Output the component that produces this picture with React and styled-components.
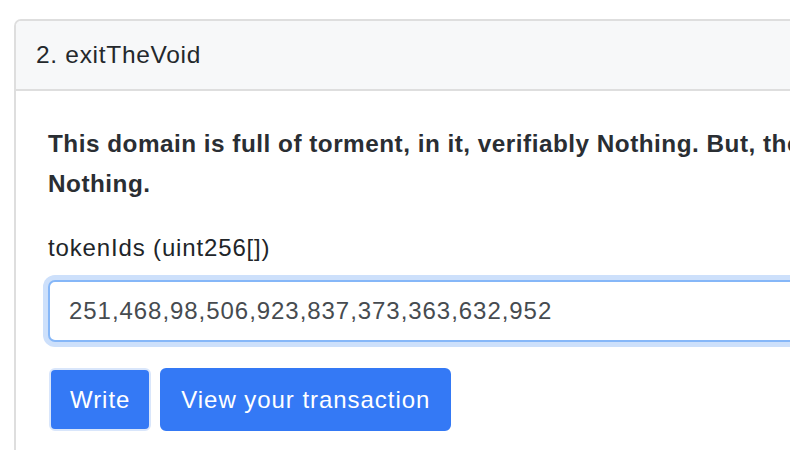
import React, { useState } from 'react';
import styled, { createGlobalStyle } from 'styled-components';

const GlobalStyle = createGlobalStyle`
  html, body {
    margin: 0;
    padding: 0;
    background: #fff;
    overflow: hidden;
  }
  body {
    font-family: "Liberation Sans", Arial, Helvetica, sans-serif;
    color: #212529;
  }
`;

const Page = styled.div`
  width: 790px;
  height: 450px;
  overflow: hidden;
  padding: 19px 0 0 14px;
  box-sizing: border-box;
`;

const Card = styled.div`
  width: 1000px;
  min-height: 600px;
  border: 2px solid #dedede;
  border-radius: 7px;
  background: #fff;
  overflow: hidden;
`;

const CardHeader = styled.div`
  background: #f7f8f9;
  border-bottom: 2px solid #dedede;
  padding: 16px 20px;
  font-size: 24.5px;
  line-height: 36px;
  letter-spacing: 0.7px;
  color: #24282c;
`;

const CardBody = styled.div`
  padding: 33px 32px;
`;

const Description = styled.p`
  margin: 0 0 26px;
  font-size: 24.3px;
  line-height: 40px;
  font-weight: 700;
  letter-spacing: 0.5px;
  width: 870px;
  color: #2a2e33;
`;

const Label = styled.label`
  display: block;
  font-size: 24px;
  line-height: 36px;
  letter-spacing: 0.85px;
  margin-bottom: 14px;
  color: #212529;
`;

const Input = styled.input`
  display: block;
  box-sizing: border-box;
  width: 900px;
  height: 62px;
  padding: 0 19px;
  font-family: inherit;
  font-size: 24px;
  letter-spacing: 0.95px;
  color: #464b50;
  border: 2px solid #86b7f8;
  border-radius: 7px;
  box-shadow: 0 0 0 5px #cde0fb;
  outline: none;
  margin-bottom: 26px;
`;

const Actions = styled.div`
  display: flex;
  gap: 9px;
  margin-left: 1px;
`;

const Button = styled.button`
  box-sizing: border-box;
  height: 63px;
  padding: 0 19px;
  font-family: inherit;
  font-size: 24px;
  letter-spacing: 0.95px;
  color: #fff;
  background: #3479f5;
  border: 2px solid ${p => (p.$focused ? '#d9e6fb' : '#3479f5')};
  border-radius: 6px;
  cursor: pointer;
`;

export default function App() {
  const [value, setValue] = useState('251,468,98,506,923,837,373,363,632,952');

  return (
    <Page>
      <GlobalStyle />
      <Card>
        <CardHeader>2. exitTheVoid</CardHeader>
        <CardBody>
          <Description>
            This domain is full of torment, in it, verifiably Nothing. But, there is Nothing.
          </Description>
          <Label htmlFor="tokenIds">tokenIds (uint256[])</Label>
          <Input
            id="tokenIds"
            type="text"
            value={value}
            onChange={e => setValue(e.target.value)}
          />
          <Actions>
            <Button $focused>Write</Button>
            <Button>View your transaction</Button>
          </Actions>
        </CardBody>
      </Card>
    </Page>
  );
}
